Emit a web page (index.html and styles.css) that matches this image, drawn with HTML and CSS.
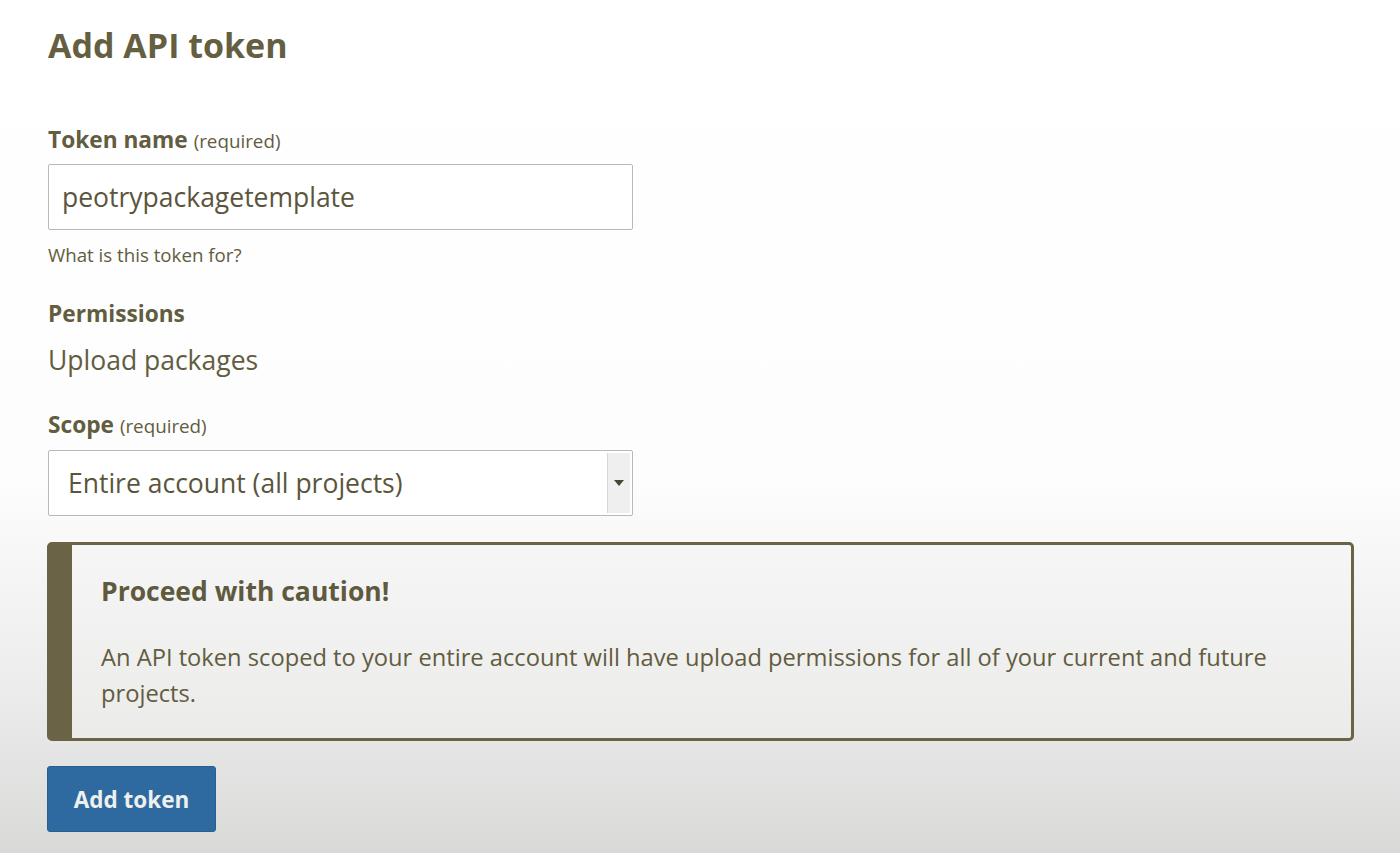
FILE: index.html
```html
<!DOCTYPE html>
<html lang="en">
<head>
<meta charset="utf-8">
<title>Add API token</title>
<link rel="stylesheet" href="styles.css">
</head>
<body>
<main class="page">
  <h1 class="title">Add API token</h1>

  <div class="field field-name">
    <label class="label">Token name <span class="req">(required)</span></label>
    <div class="input">peotrypackagetemplate</div>
    <p class="help">What is this token for?</p>
  </div>

  <div class="field field-perm">
    <div class="label">Permissions</div>
    <div class="value">Upload packages</div>
  </div>

  <div class="field field-scope">
    <label class="label">Scope <span class="req">(required)</span></label>
    <div class="select">
      <span class="select-text">Entire account (all projects)</span>
      <span class="select-arrow"><svg width="10" height="6" viewBox="0 0 10 6"><path d="M0 0h10L5 6z" fill="#4a4637"/></svg></span>
    </div>
  </div>

  <div class="callout">
    <h2 class="callout-title">Proceed with caution!</h2>
    <p class="callout-text">An API token scoped to your entire account will have upload permissions for all of your current and future projects.</p>
  </div>

  <button class="button">Add token</button>
</main>
</body>
</html>
```

FILE: styles.css
```css
html, body {
  margin: 0;
  padding: 0;
}
body {
  width: 1400px;
  height: 853px;
  overflow: hidden;
  background: linear-gradient(to bottom, #ffffff 0px, #fdfdfd 480px, #ebebeb 700px, #d9d9d8 853px);
  font-family: "Open Sans", "Noto Sans", sans-serif;
  color: #625c40;
}
.page {
  padding: 20px 46px 0 47px;
  display: flex;
  flex-direction: column;
  align-items: flex-start;
}
.title {
  margin: 0 0 0 1px;
  font-size: 34px;
  font-weight: 700;
  line-height: 50px;
  color: #655f42;
}
.field {
  display: flex;
  flex-direction: column;
  margin-left: 1px;
}
.field-name { margin-top: 55px; }
.field-perm { margin-top: 32px; }
.field-scope { margin-top: 33px; }
.label {
  font-size: 22.7px;
  font-weight: 700;
  line-height: 30px;
}
.req {
  font-size: 18.8px;
  font-weight: 400;
}
.input {
  margin-top: 8px;
  box-sizing: border-box;
  width: 585px;
  height: 66px;
  border: 1px solid #b9b9b9;
  border-radius: 2px;
  background: #fff;
  padding: 0 13px;
  display: flex;
  align-items: center;
  font-size: 26.5px;
  color: #5a553c;
}
.help {
  margin: 13px 0 0;
  font-size: 18.7px;
  line-height: 24px;
}
.value {
  margin-top: 14px;
  font-size: 26.5px;
  line-height: 34px;
}
.select {
  margin-top: 9px;
  box-sizing: border-box;
  width: 585px;
  height: 66px;
  border: 1px solid #b9b9b9;
  border-radius: 2px;
  background: #fff;
  display: flex;
  align-items: stretch;
}
.select-text {
  flex: 1;
  display: flex;
  align-items: center;
  padding-left: 19px;
  font-size: 26.5px;
  color: #5a553c;
}
.select-arrow {
  width: 22px;
  margin: 2px 2px 2px 0;
  background: #efefef;
  border-left: 1px solid #d6d6d6;
  display: flex;
  align-items: center;
  justify-content: center;
}
.callout {
  margin-top: 26px;
  box-sizing: border-box;
  width: 1307px;
  border: 3px solid #6b6346;
  border-left-width: 25px;
  border-radius: 5px;
  background: linear-gradient(to bottom, #f6f6f6, #ebebea);
  padding: 29px 28px 27px 29px;
}
.callout-title {
  margin: 0;
  font-size: 26.5px;
  font-weight: 700;
  line-height: 34px;
  color: #5f5a3e;
}
.callout-text {
  margin: 31px 0 0;
  font-size: 23.7px;
  line-height: 36px;
  color: #625c40;
}
.button {
  margin-top: 25px;
  width: 169px;
  height: 66px;
  border: 1px solid #2a5f8d;
  border-radius: 3px;
  background: #2e6aa0;
  color: #eef0ee;
  font-family: inherit;
  font-size: 22.5px;
  font-weight: 700;
  padding: 0;
}
```
